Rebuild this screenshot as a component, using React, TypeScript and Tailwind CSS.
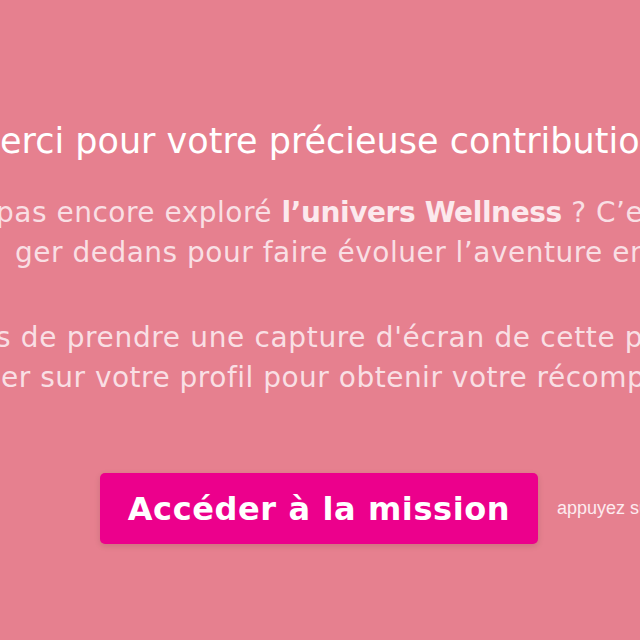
import React from "react";

function Line({
  box,
  prefix,
  children,
  className,
}: {
  box: string;
  prefix?: React.ReactNode;
  children: React.ReactNode;
  className: string;
}) {
  return (
    <div className={"flex whitespace-nowrap " + className}>
      <div className={"flex flex-none justify-end " + box}>{prefix}</div>
      <div className="flex-none">{children}</div>
    </div>
  );
}

export default function App() {
  return (
    <div
      className="w-[640px] h-[640px] overflow-hidden bg-[#e6808f]"
      style={{ fontFamily: "'DejaVu Sans', 'Noto Sans', sans-serif" }}
    >
      <div className="flex flex-col pt-[121px]">
        <Line
          box="w-0"
          prefix={<span>M</span>}
          className="text-[35px] leading-[40px] text-white"
        >
          erci pour votre précieuse contribution !
        </Line>

        <div className="mt-[32px] flex flex-col text-[28px] leading-[40px] tracking-[0.5px] text-[#f9dfe4]">
          <Line box="w-0" prefix={<span>Vous n’avez</span>} className="-ml-[4px]">
            {" "}pas encore exploré{" "}
            <span className="font-bold tracking-[-0.4px] text-[#fce9ed]">l’univers Wellness</span> ? C’est le moment
          </Line>
          <Line box="w-[15px]" className="">
            ger dedans pour faire évoluer l’aventure ensemble !
          </Line>
          <Line box="w-0" prefix={<span>N'oubliez pa</span>} className="-ml-[4px] mt-[45px] tracking-[0.65px]">
            s de prendre une capture d'écran de cette page
          </Line>
          <Line box="w-[1px]" prefix={<span>et de la télécharg</span>} className="">
            er sur votre profil pour obtenir votre récompense.
          </Line>
        </div>

        <div className="mt-[75px] flex items-center whitespace-nowrap pl-[100px]">
          <button className="flex h-[71px] w-[438px] flex-none items-center justify-center rounded-[5px] bg-[#ec008c] text-[32px] font-bold tracking-[0.6px] text-white shadow-[0_2px_6px_rgba(0,0,0,0.12)]">
            Accéder à la mission
          </button>
          <span
            className="ml-[19px] flex-none text-[18px] text-[#fdebef]"
            style={{ fontFamily: "'Liberation Sans', Arial, sans-serif" }}
          >
            appuyez sur le bouton
          </span>
        </div>
      </div>
    </div>
  );
}
